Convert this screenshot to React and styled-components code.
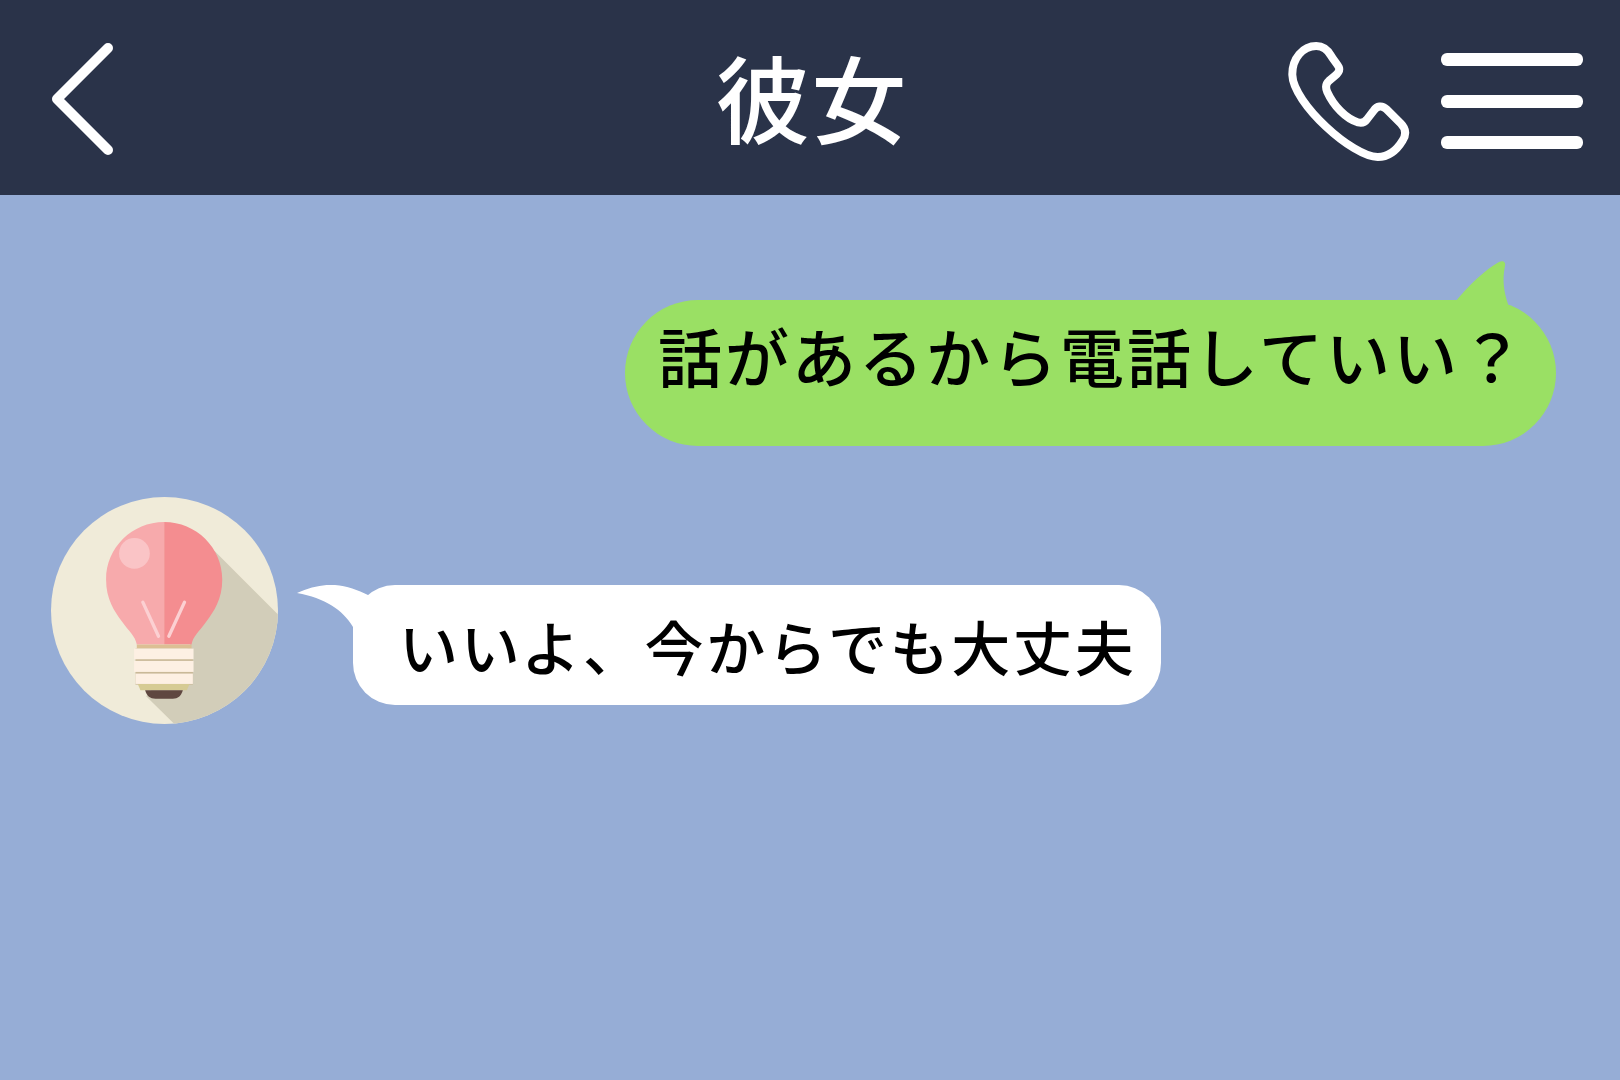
import React from "react";
import styled, { createGlobalStyle } from "styled-components";

const GlobalStyle = createGlobalStyle`
  html, body {
    margin: 0;
    padding: 0;
    background: #96add6;
  }
`;

const Screen = styled.div`
  width: 1620px;
  height: 1080px;
  overflow: hidden;
  background: #96add6;
  font-family: "Noto Sans CJK JP", "Noto Sans", sans-serif;
  color: #000;
`;

const Header = styled.header`
  height: 195px;
  display: grid;
  grid-template-columns: 1fr auto 1fr;
  align-items: center;
  background: #2a3349;
`;

const BackButton = styled.div`
  display: flex;
  align-items: center;
  padding: 7px 0 0 50px;
`;

const Title = styled.h1`
  margin: 0;
  padding: 0 0 4px 3px;
  font-size: 95px;
  font-weight: 500;
  line-height: 1;
  letter-spacing: 1px;
  color: #fff;
`;

const Actions = styled.div`
  display: flex;
  align-items: center;
  justify-content: flex-end;
  gap: 28px;
  padding: 7px 37px 0 0;
`;

const Menu = styled.div`
  display: flex;
  flex-direction: column;
  gap: 28.5px;
  width: 142px;
`;

const MenuBar = styled.span`
  display: block;
  height: 13px;
  border-radius: 6px;
  background: #fff;
`;

const Chat = styled.main`
  display: flex;
  flex-direction: column;
  padding: 105px 64px 0 51px;
`;

const OutgoingRow = styled.div`
  display: flex;
  justify-content: flex-end;
`;

const IncomingRow = styled.div`
  display: flex;
  align-items: flex-start;
  gap: 75px;
  margin-top: 51px;
`;

const Bubble = styled.div`
  position: relative;
  box-sizing: border-box;
  white-space: nowrap;
  font-weight: 500;
  line-height: 70px;
`;

const GreenBubble = styled(Bubble)`
  width: 931px;
  height: 146px;
  padding: 19px 0 0 33px;
  border-radius: 73px;
  background: #9ae064;
  font-size: 64px;
  letter-spacing: 3px;
`;

const WhiteBubble = styled(Bubble)`
  width: 808px;
  height: 120px;
  margin-top: 88px;
  padding: 26px 0 0 46px;
  border-radius: 42px;
  background: #fff;
  font-size: 59px;
  letter-spacing: 2.7px;
`;

const GreenTail = styled.svg`
  position: absolute;
  top: -40px;
  right: 46px;
`;

const WhiteTail = styled.svg`
  position: absolute;
  top: 0;
  left: -58px;
`;

const BubbleText = styled.span`
  position: relative;
`;

function BackIcon() {
  return (
    <svg width="70" height="116" viewBox="0 0 70 116" fill="none">
      <path
        d="M58 5 L7 56 L58 107"
        stroke="#fff"
        strokeWidth="10"
        strokeLinecap="round"
        strokeLinejoin="round"
      />
    </svg>
  );
}

function PhoneIcon() {
  return (
    <svg width="127" height="123" viewBox="80 60 380 370" fill="none">
      <path
        d="M170 78 C190 78 205 90 215 108 C222 120 232 130 238 142 C242 152 236 160 226 168 L208 183 C198 192 197 202 203 216 C222 258 258 296 296 308 C308 311 316 308 323 298 L343 272 C352 258 368 255 381 268 L424 311 C440 327 442 343 430 362 C412 392 385 412 355 412 C280 412 100 250 98 165 C97 115 130 78 170 78 Z"
        stroke="#fff"
        strokeWidth="24"
        strokeLinejoin="round"
      />
    </svg>
  );
}

function BulbAvatar() {
  return (
    <svg width="227" height="227" viewBox="65 53 680 680">
      <defs>
        <clipPath id="avatarClip">
          <circle cx="405" cy="393" r="340" />
        </clipPath>
      </defs>
      <circle cx="405" cy="393" r="340" fill="#f0ebd9" />
      <g clipPath="url(#avatarClip)">
        <path d="M555 215 L760 420 L760 760 L462 760 L350 650 L480 500 Z" fill="#d2cdb9" />
      </g>
      <path
        d="M404 128 C308 128 230 205 230 300 C230 360 255 395 277 425 C298 455 318 470 322 495 L404 495 Z"
        fill="#f7aaac"
      />
      <path
        d="M404 128 C500 128 578 205 578 300 C578 360 553 395 531 425 C510 455 490 470 486 495 L404 495 Z"
        fill="#f48d90"
      />
      <circle cx="315" cy="222" r="46" fill="#fac4c6" />
      <path
        d="M340 368 L387 470 M465 368 L418 470"
        stroke="#fcd0d2"
        strokeWidth="10"
        strokeLinecap="round"
      />
      <rect x="322" y="495" width="164" height="12" fill="#dcbf94" />
      <rect x="318" y="507" width="172" height="108" fill="#c9b998" />
      <rect x="314" y="507" width="178" height="32" fill="#fdf0e3" />
      <rect x="314" y="544" width="178" height="33" fill="#fdf0e3" />
      <rect x="318" y="582" width="172" height="31" fill="#fdf0e3" />
      <path d="M325 613 L480 613 L472 632 L333 632 Z" fill="#d6cb94" />
      <path d="M347 632 L460 632 C455 650 445 657 430 657 L378 657 C362 657 352 650 347 632 Z" fill="#5f4740" />
    </svg>
  );
}

export default function App() {
  return (
    <Screen>
      <GlobalStyle />
      <Header>
        <BackButton>
          <BackIcon />
        </BackButton>
        <Title>彼女</Title>
        <Actions>
          <PhoneIcon />
          <Menu>
            <MenuBar />
            <MenuBar />
            <MenuBar />
          </Menu>
        </Actions>
      </Header>
      <Chat>
        <OutgoingRow>
          <GreenBubble>
            <GreenTail width="55" height="50" viewBox="0 0 55 50">
              <path
                d="M0 42 C15 24 30 10 44 2 C48 0 51 2 50 6 C47 20 49 32 53 44 L53 50 L0 50 Z"
                fill="#9ae064"
              />
            </GreenTail>
            <BubbleText>話があるから電話していい？</BubbleText>
          </GreenBubble>
        </OutgoingRow>
        <IncomingRow>
          <BulbAvatar />
          <WhiteBubble>
            <WhiteTail width="75" height="46" viewBox="0 0 75 46">
              <path
                d="M2 8 C15 2 30 -1 40 0 C52 1 63 5 73 10 L73 45 L58 42 C48 25 30 13 2 8 Z"
                fill="#fff"
              />
            </WhiteTail>
            <BubbleText>いいよ、今からでも大丈夫</BubbleText>
          </WhiteBubble>
        </IncomingRow>
      </Chat>
    </Screen>
  );
}
